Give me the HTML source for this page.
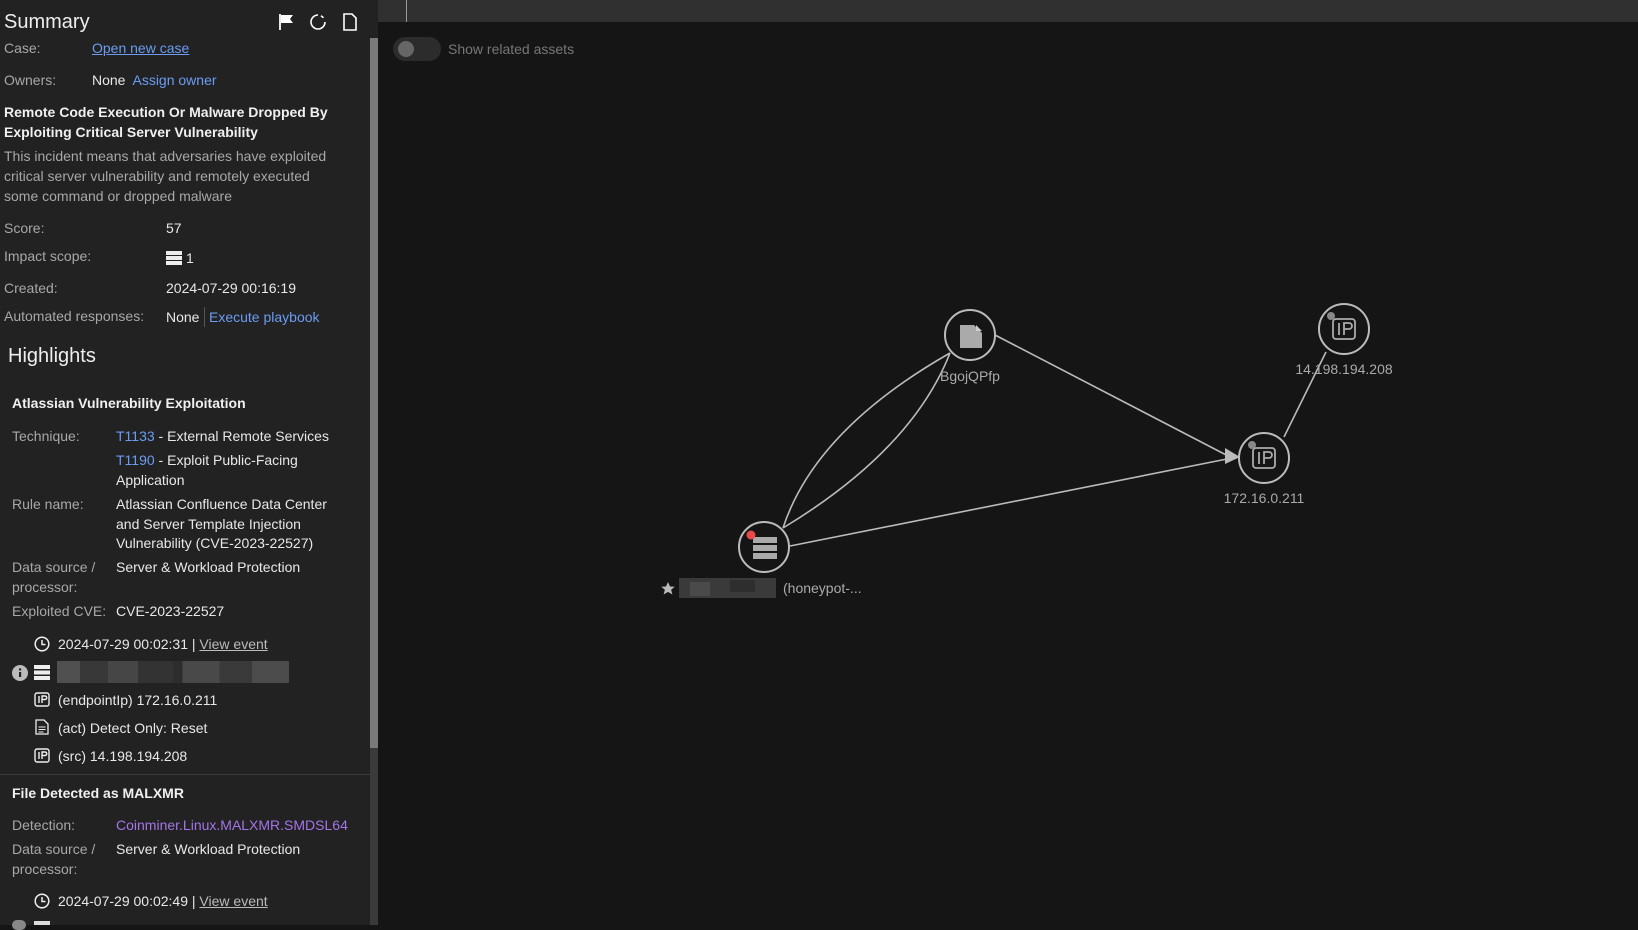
<!DOCTYPE html>
<html><head><meta charset="utf-8"><style>
*{margin:0;padding:0;box-sizing:border-box}
body{width:1638px;height:925px;background:#151515;font-family:"Liberation Sans",sans-serif;overflow:hidden;position:relative;color:#e4e4e4}
.p{position:absolute;left:0;top:0;width:378px;height:925px;background:#222}
.t{position:absolute;white-space:nowrap;font-size:14px;line-height:20px}
.l{color:#a8a8a8}
.v{color:#e8e8e8}
.a{color:#6b9cf2}
.u{text-decoration:underline}
.b{font-weight:bold;color:#f0f0f0}
.g{color:#bbb}
.ic{position:absolute}
</style></head><body>
<div class="p"></div>
<div style="position:absolute;left:370px;top:38px;width:8px;height:710px;background:#7a7a7a"></div>
<div style="position:absolute;left:370px;top:748px;width:8px;height:177px;background:#3a3a3a"></div>
<div style="position:absolute;left:378px;top:0;width:1260px;height:22px;background:#303030"></div>
<div style="position:absolute;left:406px;top:0;width:1px;height:22px;background:#999"></div>

<div class="t" style="left:4px;top:10px;font-size:20px;line-height:24px;color:#eee">Summary</div>
<svg class="ic" style="left:278px;top:13px" width="18" height="18" viewBox="0 0 18 18"><path d="M2 1v16" stroke="#fff" stroke-width="1.8"/><path d="M3 2h12l-3 4 3 4H3z" fill="#fff"/></svg>
<svg class="ic" style="left:309px;top:13px" width="18" height="18" viewBox="0 0 18 18"><path d="M9 2a7 7 0 1 0 7 7" fill="none" stroke="#fff" stroke-width="1.6"/><path d="M12 2.8l2.5 2" stroke="#fff" stroke-width="1.6"/></svg>
<svg class="ic" style="left:342px;top:13px" width="16" height="18" viewBox="0 0 16 18"><path d="M2 1h8l4 4v12H2z" fill="none" stroke="#fff" stroke-width="1.6"/></svg>

<div class="t l" style="left:4px;top:38px">Case:</div>
<div class="t a u" style="left:92px;top:38px">Open new case</div>
<div class="t l" style="left:4px;top:70px">Owners:</div>
<div class="t v" style="left:92px;top:70px">None&nbsp; <span class="a">Assign owner</span></div>
<div class="t b" style="left:4px;top:102px">Remote Code Execution Or Malware Dropped By</div>
<div class="t b" style="left:4px;top:122px">Exploiting Critical Server Vulnerability</div>
<div class="t l" style="left:4px;top:146px">This incident means that adversaries have exploited</div>
<div class="t l" style="left:4px;top:166px">critical server vulnerability and remotely executed</div>
<div class="t l" style="left:4px;top:186px">some command or dropped malware</div>
<div class="t l" style="left:4px;top:218px">Score:</div><div class="t v" style="left:166px;top:218px">57</div>
<div class="t l" style="left:4px;top:246px">Impact scope:</div>
<svg class="ic" style="left:166px;top:251px" width="16" height="14" viewBox="0 0 16 14"><rect x="0" y="0" width="16" height="4" fill="#eee"/><rect x="0" y="5" width="16" height="4" fill="#eee"/><rect x="0" y="10" width="16" height="4" fill="#eee"/></svg>
<div class="t v" style="left:186px;top:248px">1</div>
<div class="t l" style="left:4px;top:278px">Created:</div><div class="t v" style="left:166px;top:278px">2024-07-29 00:16:19</div>
<div class="t l" style="left:4px;top:306px">Automated responses:</div>
<div class="t v" style="left:166px;top:307px">None</div>
<div style="position:absolute;left:204px;top:307px;width:1px;height:20px;background:#555"></div>
<div class="t a" style="left:209px;top:307px">Execute playbook</div>

<div class="t" style="left:8px;top:344px;font-size:20px;line-height:24px;color:#eee">Highlights</div>
<div class="t b" style="left:12px;top:393px">Atlassian Vulnerability Exploitation</div>
<div class="t l" style="left:12px;top:426px">Technique:</div>
<div class="t v" style="left:116px;top:426px"><span class="a">T1133</span> - External Remote Services</div>
<div class="t v" style="left:116px;top:450px"><span class="a">T1190</span> - Exploit Public-Facing</div>
<div class="t v" style="left:116px;top:470px">Application</div>
<div class="t l" style="left:12px;top:494px">Rule name:</div>
<div class="t v" style="left:116px;top:494px">Atlassian Confluence Data Center</div>
<div class="t v" style="left:116px;top:514px">and Server Template Injection</div>
<div class="t v" style="left:116px;top:533px">Vulnerability (CVE-2023-22527)</div>
<div class="t l" style="left:12px;top:557px">Data source /</div>
<div class="t v" style="left:116px;top:557px">Server &amp; Workload Protection</div>
<div class="t l" style="left:12px;top:577px">processor:</div>
<div class="t l" style="left:12px;top:601px">Exploited CVE:</div>
<div class="t v" style="left:116px;top:601px">CVE-2023-22527</div>

<svg class="ic" style="left:34px;top:636px" width="16" height="16" viewBox="0 0 16 16"><circle cx="8" cy="8" r="6.8" fill="none" stroke="#eee" stroke-width="1.5"/><path d="M8 4v4.5h3.5" fill="none" stroke="#eee" stroke-width="1.5"/></svg>
<div class="t v" style="left:58px;top:634px">2024-07-29 00:02:31 | <span class="g u">View event</span></div>
<svg class="ic" style="left:12px;top:665px" width="16" height="16" viewBox="0 0 16 16"><circle cx="8" cy="8" r="8" fill="#bbb"/><rect x="7" y="7" width="2.2" height="5" fill="#222"/><circle cx="8.1" cy="4.5" r="1.2" fill="#222"/></svg>
<svg class="ic" style="left:34px;top:665px" width="16" height="15" viewBox="0 0 16 15"><rect y="0" width="16" height="4" fill="#eee"/><rect y="5.5" width="16" height="4" fill="#eee"/><rect y="11" width="16" height="4" fill="#eee"/></svg>
<div style="position:absolute;left:57px;top:661px;width:232px;height:22px;background:linear-gradient(90deg,#555 0 10%,#3a3a3a 10% 22%,#4a4a4a 22% 35%,#353535 35% 50%,#2e2e2e 50% 54%,#4d4d4d 54% 70%,#3c3c3c 70% 84%,#505050 84% 100%);opacity:.9"></div>
<svg class="ic" style="left:34px;top:692px" width="16" height="15" viewBox="0 0 16 15"><rect x="1" y="1" width="14" height="13" rx="2" fill="none" stroke="#eee" stroke-width="1.4"/><path d="M5 4v7M8 11V4h3a1.7 1.7 0 0 1 0 3.5H8" fill="none" stroke="#eee" stroke-width="1.4"/></svg>
<div class="t v" style="left:58px;top:690px">(endpointIp) 172.16.0.211</div>
<svg class="ic" style="left:35px;top:719px" width="14" height="16" viewBox="0 0 14 16"><path d="M1 1h8l4 4v10H1z" fill="none" stroke="#eee" stroke-width="1.3"/><path d="M3.5 8h7M3.5 10.5h7M3.5 13h5" stroke="#eee"/></svg>
<div class="t v" style="left:58px;top:718px">(act) Detect Only: Reset</div>
<svg class="ic" style="left:34px;top:748px" width="16" height="15" viewBox="0 0 16 15"><rect x="1" y="1" width="14" height="13" rx="2" fill="none" stroke="#eee" stroke-width="1.4"/><path d="M5 4v7M8 11V4h3a1.7 1.7 0 0 1 0 3.5H8" fill="none" stroke="#eee" stroke-width="1.4"/></svg>
<div class="t v" style="left:58px;top:746px">(src) 14.198.194.208</div>
<div style="position:absolute;left:0;top:774px;width:370px;height:1px;background:#3a3a3a"></div>
<div class="t b" style="left:12px;top:783px">File Detected as MALXMR</div>
<div class="t l" style="left:12px;top:815px">Detection:</div>
<div class="t" style="left:116px;top:815px;color:#a474e8">Coinminer.Linux.MALXMR.SMDSL64</div>
<div class="t l" style="left:12px;top:839px">Data source /</div>
<div class="t v" style="left:116px;top:839px">Server &amp; Workload Protection</div>
<div class="t l" style="left:12px;top:859px">processor:</div>
<svg class="ic" style="left:34px;top:893px" width="16" height="16" viewBox="0 0 16 16"><circle cx="8" cy="8" r="6.8" fill="none" stroke="#eee" stroke-width="1.5"/><path d="M8 4v4.5h3.5" fill="none" stroke="#eee" stroke-width="1.5"/></svg>
<div class="t v" style="left:58px;top:891px">2024-07-29 00:02:49 | <span class="g u">View event</span></div>
<div style="position:absolute;left:12px;top:920px;width:14px;height:10px;border-radius:7px;background:#888"></div>
<div style="position:absolute;left:34px;top:921px;width:16px;height:4px;background:#ddd"></div>

<div style="position:absolute;left:393px;top:37px;width:48px;height:24px;border-radius:12px;background:#2c2c2c"></div>
<div style="position:absolute;left:398px;top:41px;width:16px;height:16px;border-radius:8px;background:#666"></div>
<div class="t" style="left:448px;top:39px;color:#777">Show related assets</div>

<svg style="position:absolute;left:0;top:0" width="1638" height="925">
<g stroke="#bbb" stroke-width="1.6" fill="none">
<path d="M783 528 Q815 430 950 353"/>
<path d="M783 528 Q912 450 950 353"/>
<path d="M995 335 L1232 458"/>
<path d="M790 546 L1232 458"/>
<path d="M1284 437 L1326 352"/>
</g>
<path d="M1240 457 l-15 -9 l0 16z" fill="#bbb"/>
<g stroke="#bbb" stroke-width="2" fill="#151515">
<circle cx="970" cy="335" r="25"/><circle cx="1264" cy="458" r="25"/><circle cx="1344" cy="329" r="25"/><circle cx="764" cy="547" r="25"/>
</g>
<path d="M960 325h14l8 8v15h-22z" fill="#aaa"/>
<path d="M976 325l6 6h-6z" fill="#ccc"/>
<rect x="1253" y="448" width="22" height="20" rx="3" fill="none" stroke="#aaa" stroke-width="1.8"/><path d="M1259 452v12M1264 464v-12h5a3 3 0 0 1 0 6h-5" fill="none" stroke="#aaa" stroke-width="1.8"/>
<rect x="1333" y="319" width="22" height="20" rx="3" fill="none" stroke="#aaa" stroke-width="1.8"/><path d="M1339 323v12M1344 335v-12h5a3 3 0 0 1 0 6h-5" fill="none" stroke="#aaa" stroke-width="1.8"/>
<circle cx="1252" cy="445" r="4" fill="#888"/><circle cx="1331" cy="316" r="4" fill="#888"/>
<rect x="753" y="537" width="24" height="6" fill="#aaa"/><rect x="753" y="545" width="24" height="6" fill="#aaa"/><rect x="753" y="553" width="24" height="6" fill="#aaa"/>
<circle cx="751" cy="535" r="4.5" fill="#e84848"/>
<g font-family="Liberation Sans, sans-serif" font-size="14" fill="#aaa" text-anchor="middle">
<text x="970" y="381">BgojQPfp</text>
<text x="1264" y="503">172.16.0.211</text>
<text x="1344" y="374">14.198.194.208</text>
<text x="783" y="593" text-anchor="start">(honeypot-...</text>
</g>
<path d="M668 582 l2 4.5 4.8 .3 -3.7 3 1.3 4.7 -4.4 -2.6 -4.4 2.6 1.3 -4.7 -3.7 -3 4.8 -.3z" fill="#bbb"/>
<rect x="679" y="578" width="97" height="20" fill="#3a3a3a"/><rect x="690" y="582" width="20" height="14" fill="#4a4a4a"/><rect x="730" y="580" width="25" height="12" fill="#2e2e2e"/>
</svg>
</body></html>
